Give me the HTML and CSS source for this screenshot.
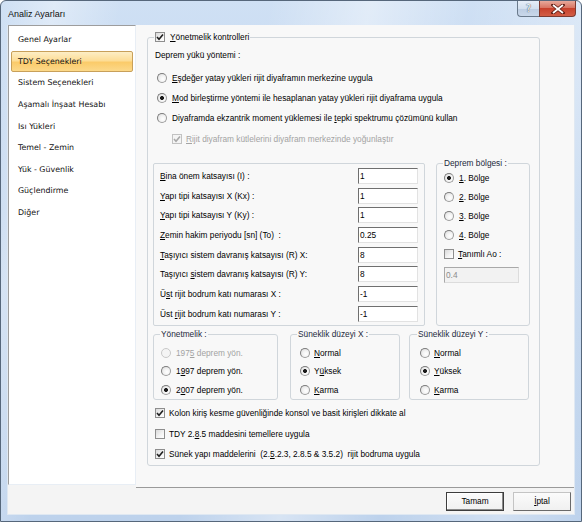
FILE: index.html
```html
<!DOCTYPE html>
<html lang="tr">
<head>
<meta charset="utf-8">
<title>Analiz Ayarları</title>
<link rel="stylesheet" href="styles.css">
</head>
<body>
<div class="window">
  <div class="titlebar">
    <span class="title">Analiz Ayarları</span>
    <div class="caption-btns">
      <span class="cbtn help">?</span>
      <span class="cbtn close"><svg width="14" height="10" viewBox="0 0 14 10"><path d="M2 1 L12 9 M12 1 L2 9" stroke="#5a1a10" stroke-width="3.4" stroke-linecap="square"/><path d="M2 1 L12 9 M12 1 L2 9" stroke="#ffffff" stroke-width="1.8"/></svg></span>
    </div>
  </div>
  <div class="client">
    <div class="main">
      <ul class="nav">
        <li class="nav-item">Genel Ayarlar</li>
        <li class="nav-item active">TDY Seçenekleri</li>
        <li class="nav-item">Sistem Seçenekleri</li>
        <li class="nav-item">Aşamalı İnşaat Hesabı</li>
        <li class="nav-item">Isı Yükleri</li>
        <li class="nav-item">Temel - Zemin</li>
        <li class="nav-item">Yük - Güvenlik</li>
        <li class="nav-item">Güçlendirme</li>
        <li class="nav-item">Diğer</li>
      </ul>
      <div class="panel">
        <fieldset class="grp main-grp">
          <legend class="legend-chk"><span class="chk on"><svg viewBox="0 0 8 8"><path d="M1 4 L3 6.2 L7 1.5" fill="none" stroke="#1f1f1f" stroke-width="1.6"/></svg></span><u>Y</u>önetmelik kontrolleri</legend>
          <div class="caption">Deprem yükü yöntemi :</div>
          <div class="opts">
            <div class="opt"><span class="radio"></span><span><u>E</u>şdeğer yatay yükleri rijit diyaframın merkezine uygula</span></div>
            <div class="opt"><span class="radio on"></span><span><u>M</u>od birleştirme yöntemi ile hesaplanan yatay yükleri rijit diyaframa uygula</span></div>
            <div class="opt"><span class="radio"></span><span>Diyaframda ekzantrik moment yüklemesi ile <u>t</u>epki spektrumu çözümünü kullan</span></div>
            <div class="opt sub disabled"><span class="chk on dis"><svg viewBox="0 0 8 8"><path d="M1 4 L3 6.2 L7 1.5" fill="none" stroke="#a8a8a8" stroke-width="1.6"/></svg></span><span><u>R</u>ijit diyafram kütlelerini diyafram merkezinde yoğunlaştır</span></div>
          </div>
          <div class="row-mid">
            <div class="fields">
              <div class="field"><span><u>B</u>ina önem katsayısı (I) :</span><span class="num">1</span></div>
              <div class="field"><span><u>Y</u>apı tipi katsayısı X (Kx) :</span><span class="num">1</span></div>
              <div class="field"><span><u>Y</u>apı tipi katsayısı Y (Ky) :</span><span class="num">1</span></div>
              <div class="field"><span><u>Z</u>emin hakim periyodu [sn] (To)&nbsp; :</span><span class="num">0.25</span></div>
              <div class="field"><span><u>T</u>aşıyıcı sistem davranış katsayısı (R) X:</span><span class="num">8</span></div>
              <div class="field"><span>Taşıyıcı <u>s</u>istem davranış katsayısı (R) Y:</span><span class="num">8</span></div>
              <div class="field"><span>Ü<u>s</u>t rijit bodrum katı numarası X :</span><span class="num">-1</span></div>
              <div class="field"><span>Üst <u>r</u>ijit bodrum katı numarası Y :</span><span class="num">-1</span></div>
            </div>
            <fieldset class="grp zone">
              <legend>Deprem bölgesi :</legend>
              <div class="zone-opts">
                <div class="zopt"><span class="radio on"></span><span><u>1</u>. Bölge</span></div>
                <div class="zopt"><span class="radio"></span><span><u>2</u>. Bölge</span></div>
                <div class="zopt"><span class="radio"></span><span><u>3</u>. Bölge</span></div>
                <div class="zopt"><span class="radio"></span><span><u>4</u>. Bölge</span></div>
                <div class="zopt"><span class="chk"></span><span><u>T</u>anımlı Ao :</span></div>
              </div>
              <span class="num wide dis">0.4</span>
            </fieldset>
          </div>
          <div class="row-bot">
            <fieldset class="grp small g1">
              <legend>Yönetmelik :</legend>
              <div class="sopt disabled"><span class="radio dis"></span><span>197<u>5</u> deprem yön.</span></div>
              <div class="sopt"><span class="radio"></span><span>1<u>9</u>97 deprem yön.</span></div>
              <div class="sopt"><span class="radio on"></span><span>2<u>0</u>07 deprem yön.</span></div>
            </fieldset>
            <fieldset class="grp small g2">
              <legend>Süneklik düzeyi X :</legend>
              <div class="sopt"><span class="radio"></span><span><u>N</u>ormal</span></div>
              <div class="sopt"><span class="radio on"></span><span>Y<u>ü</u>ksek</span></div>
              <div class="sopt"><span class="radio"></span><span><u>K</u>arma</span></div>
            </fieldset>
            <fieldset class="grp small g3">
              <legend>Süneklik düzeyi Y :</legend>
              <div class="sopt"><span class="radio"></span><span><u>N</u>ormal</span></div>
              <div class="sopt"><span class="radio on"></span><span><u>Y</u>üksek</span></div>
              <div class="sopt"><span class="radio"></span><span><u>K</u>arma</span></div>
            </fieldset>
          </div>
          <div class="checks">
            <div class="copt"><span class="chk on"><svg viewBox="0 0 8 8"><path d="M1 4 L3 6.2 L7 1.5" fill="none" stroke="#1f1f1f" stroke-width="1.6"/></svg></span><span>Kolon kiriş kesme güvenliğinde konsol ve basit kirişleri dikkate al</span></div>
            <div class="copt"><span class="chk"></span><span>TDY 2.<u>8</u>.5 maddesini temellere uygula</span></div>
            <div class="copt"><span class="chk on"><svg viewBox="0 0 8 8"><path d="M1 4 L3 6.2 L7 1.5" fill="none" stroke="#1f1f1f" stroke-width="1.6"/></svg></span><span>Sünek yapı maddelerini&nbsp; (2.<u>5</u>.2.3, 2.8.5 &amp; 3.5.2)&nbsp; rijit bodruma uygula</span></div>
          </div>
        </fieldset>
      </div>
    </div>
    <div class="footer">
      <button class="btn default">Tamam</button>
      <button class="btn"><u>İ</u>ptal</button>
    </div>
  </div>
</div>
</body>
</html>
```

FILE: styles.css
```css
* { box-sizing: border-box; }
html, body { margin: 0; padding: 0; }
body {
  width: 582px;
  height: 522px;
  overflow: hidden;
  font-family: "Liberation Sans", Arial, sans-serif;
  font-size: 8.3px;
  color: #000;
  background: #ffffff;
}
u { text-decoration: underline; text-underline-offset: 1px; }

.window {
  width: 582px;
  height: 522px;
  border: 1px solid #56677b;
  border-radius: 6px 6px 0 0;
  background:
    linear-gradient(100deg, rgba(255,255,255,0) 0%, rgba(255,255,255,0.35) 8%, rgba(255,255,255,0) 18%, rgba(255,255,255,0) 40%, rgba(255,255,255,0.4) 55%, rgba(255,255,255,0) 70%, rgba(255,255,255,0.3) 88%, rgba(255,255,255,0) 100%),
    linear-gradient(180deg, #cfe0f4 0%, #c0d5ee 40%, #bdd2ec 100%);
  display: flex;
  flex-direction: column;
}

.titlebar {
  height: 24px;
  display: flex;
  align-items: flex-start;
  padding-left: 7px;
}
.title {
  font-family: "Liberation Sans", Arial, sans-serif;
  font-size: 9px;
  line-height: 26px;
  color: #111;
}
.caption-btns {
  margin-left: auto;
  margin-right: 5px;
  display: flex;
}
.cbtn {
  height: 16px;
  display: flex;
  align-items: center;
  justify-content: center;
  border: 1px solid #6a7a8c;
  border-top: none;
}
.help {
  width: 22px;
  border-radius: 0 0 0 4px;
  border-right: none;
  background: linear-gradient(180deg, #e6eef8 0%, #d3e0ef 50%, #bccde2 51%, #c9d8ea 100%);
  font-family: "DejaVu Sans", sans-serif;
  font-size: 10px;
  color: #ffffff;
  text-shadow: 0 0 1px #3a4a5c, 0 0 1px #3a4a5c;
}
.close {
  width: 37px;
  border-radius: 0 0 4px 0;
  border-color: #7d3a30;
  background: linear-gradient(180deg, #e7a99b 0%, #d87563 45%, #c7412c 50%, #d25d45 100%);
}

.client {
  margin: 0 6px 0 6px;
  height: 490px;
  background: #f4f4f4;
  border: 1px solid #dfe8f2;
  border-top: none;
  display: flex;
  flex-direction: column;
}

.main {
  height: 463px;
  display: flex;
  align-items: flex-start;
}

.nav {
  list-style: none;
  margin: 0;
  padding: 3px 0 0 0;
  width: 128px;
  height: 460px;
  background: #ffffff;
  border-style: solid;
  border-width: 1px;
  border-color: #9d9d9d #e8eef5 #e8eef5 #9d9d9d;
  font-family: "DejaVu Sans", sans-serif;
  font-size: 7.9px;
  color: #111;
}
.nav-item {
  height: 21.6px;
  margin: 0 2px;
  padding-left: 6px;
  display: flex;
  align-items: center;
  border: 1px solid transparent;
  border-radius: 2px;
}
.nav-item.active {
  border-color: #c8a05a;
  background: linear-gradient(180deg, #fdeec5 0%, #fddd96 45%, #fbcb6a 55%, #fcd98a 100%);
}

.panel {
  flex: 1;
  height: 463px;
  background: #f8f8f8;
  border-bottom: 1px solid #9a9a9a;
  padding-top: 6px;
}

.grp {
  margin: 0;
  border: 1px solid #d0d6db;
  border-radius: 3px;
  min-width: 0;
}
.grp legend {
  padding: 0 1px;
  line-height: 12px;
  height: 12px;
  color: #1c2a3c;
}

.main-grp {
  margin-left: 11px;
  width: 393px;
  height: 435px;
  padding: 0 0 0 5px;
}
.legend-chk {
  display: flex;
  align-items: center;
  margin-left: 1px;
  color: #000 !important;
}
.legend-chk .chk { margin-right: 5px; }

.caption {
  margin-top: 5px;
  height: 14px;
  line-height: 14px;
  padding-left: 2px;
}
.opts { margin-top: 5.5px; }
.opt {
  height: 20.3px;
  display: flex;
  align-items: center;
  padding-left: 4px;
}
.opt.sub { padding-left: 19px; }
.disabled { color: #a3a3a3; }

.radio {
  flex: none;
  width: 10px;
  height: 10px;
  border-radius: 50%;
  border: 1px solid #9c9c9c;
  border-top-color: #7d7d7d;
  border-left-color: #7d7d7d;
  background: radial-gradient(circle at 62% 62%, #ffffff 0%, #f2f2f2 45%, #d6d6d6 100%);
  margin-right: 5px;
}
.radio.on {
  background:
    radial-gradient(circle, #1b1b1b 0, #1b1b1b 1.6px, rgba(0,0,0,0) 2.3px),
    radial-gradient(circle at 62% 62%, #ffffff 0%, #f2f2f2 45%, #d6d6d6 100%);
}
.radio.dis { border-color: #c8c8c8; background: #f4f4f4; }

.chk {
  flex: none;
  width: 10px;
  height: 10px;
  border: 1px solid #8e8e8e;
  background: linear-gradient(135deg, #d9d9d9 0%, #f4f4f4 60%, #ffffff 100%);
  display: flex;
  align-items: center;
  justify-content: center;
  margin-right: 4px;
}
.chk svg { width: 8px; height: 8px; display: block; }
.chk.dis { border-color: #c2c2c2; background: #f4f4f4; }

.row-mid {
  margin-top: 8.5px;
  display: flex;
  align-items: flex-start;
}
.fields {
  margin-top: 6px;
  width: 272px;
  height: 163px;
  border: 1px solid #d0d6db;
  border-radius: 2px;
  padding: 2px 6px 0 6px;
}
.field {
  height: 19.7px;
  display: flex;
  align-items: center;
  justify-content: space-between;
}
.num {
  width: 60px;
  height: 16px;
  line-height: 14px;
  background: #ffffff;
  border-style: solid;
  border-width: 1px;
  border-color: #6f6f6f #e2e2e2 #e2e2e2 #6f6f6f;
  padding-left: 1px;
  font-size: 8.3px;
  color: #000;
}
.num.wide { display: block; width: 75px; margin-top: 4px; margin-left: 1px; }
.num.dis { color: #8c8c8c; background: #f2f2f2; border-color: #a9a9a9 #dcdcdc #dcdcdc #a9a9a9; }

.zone {
  margin-left: 11px;
  width: 94px;
  height: 169px;
  padding: 0 0 0 6px;
}
.zone-opts { margin-top: -1px; }
.zopt {
  height: 19px;
  display: flex;
  align-items: center;
  padding-left: 1px;
}

.row-bot {
  margin-top: 2px;
  display: flex;
  align-items: flex-start;
}
.small {
  height: 72px;
  padding: 3px 0 0 6px;
}
.g1 { width: 125px; }
.g2 { width: 110px; margin-left: 12px; }
.g3 { width: 120px; margin-left: 9px; padding-left: 7px; }
.sopt {
  height: 18.7px;
  display: flex;
  align-items: center;
  padding-left: 1px;
}
.g2 .sopt { padding-left: 3px; }
.g2 .radio { margin-right: 4px; }
.g3 .sopt { padding-left: 3px; }
.g3 .radio { margin-right: 4px; }

.checks { margin-top: 3px; }
.copt {
  height: 20.3px;
  display: flex;
  align-items: center;
  padding-left: 2px;
}

.footer {
  flex: 1;
  display: flex;
  align-items: center;
  justify-content: flex-end;
  padding-right: 3px;
  gap: 9px;
}
.btn {
  width: 58px;
  height: 19px;
  padding: 0;
  font-family: "Liberation Sans", Arial, sans-serif;
  font-size: 8.3px;
  color: #000;
  background: linear-gradient(180deg, #fbfbfb 0%, #f0f0f0 100%);
  border: 1px solid;
  border-color: #c4c4c4 #6a6a6a #6a6a6a #c4c4c4;
  border-radius: 0;
}
.btn.default {
  border-color: #3d3d3d;
  box-shadow: inset -1px -1px 0 #8a8a8a, inset 1px 1px 0 #ffffff;
}
```
